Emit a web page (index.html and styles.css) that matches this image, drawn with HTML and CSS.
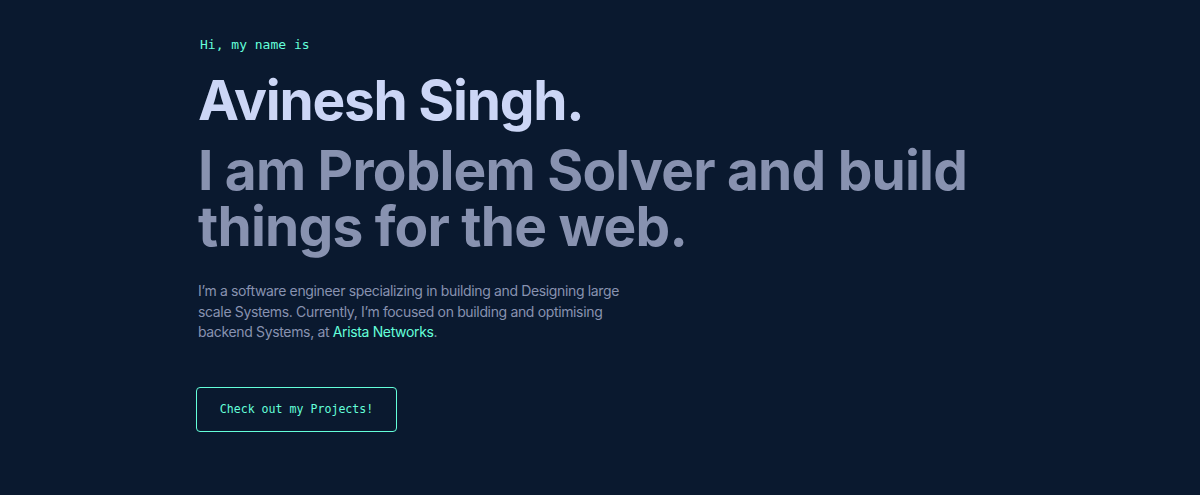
FILE: index.html
```html
<!DOCTYPE html>
<html lang="en">
<head>
<meta charset="utf-8">
<title>Avinesh Singh</title>
<link rel="stylesheet" href="styles.css">
</head>
<body>
<section class="hero">
  <p class="intro">Hi, my name is</p>
  <h1 class="name">Avinesh Singh.</h1>
  <h2 class="tagline">I am Problem Solver and build things for the web.</h2>
  <p class="bio">I’m a software engineer specializing in building and Designing large scale Systems. Currently, I’m focused on building and optimising backend Systems, at <a class="link" href="#">Arista Networks</a>.</p>
  <a class="cta" href="#">Check out my Projects!</a>
</section>
</body>
</html>
```

FILE: styles.css
```css
html, body {
  margin: 0;
  padding: 0;
  background: #0a192f;
  height: 100%;
}
body {
  font-family: Inter, "Open Sans", sans-serif;
}
.hero {
  display: flex;
  flex-direction: column;
  align-items: flex-start;
  padding: 36px 0 0 198px;
}
.intro {
  margin: 0 0 0 2px;
  font-family: "DejaVu Sans Mono", "Liberation Mono", monospace;
  font-size: 13px;
  line-height: 18px;
  color: #64ffda;
}
.name {
  margin: 15px 0 0 0;
  font-size: 55px;
  line-height: 62px;
  font-weight: 700;
  color: #ccd6f6;
  letter-spacing: -1.25px;
}
.tagline {
  margin: 11px 0 0 0;
  width: 820px;
  font-size: 55px;
  line-height: 56px;
  font-weight: 700;
  color: #8892b0;
  letter-spacing: -0.8px;
}
.bio {
  margin: 27px 0 0 0;
  width: 452px;
  font-size: 14px;
  line-height: 20.5px;
  letter-spacing: -0.35px;
  color: #8892b0;
}
.link {
  color: #64ffda;
  text-decoration: none;
}
.cta {
  margin: 44px 0 0 -2px;
  width: 199px;
  height: 43px;
  display: flex;
  align-items: center;
  justify-content: center;
  border: 1px solid #64ffda;
  border-radius: 4px;
  font-family: "DejaVu Sans Mono", "Liberation Mono", monospace;
  font-size: 11.6px;
  color: #64ffda;
  text-decoration: none;
}
```
